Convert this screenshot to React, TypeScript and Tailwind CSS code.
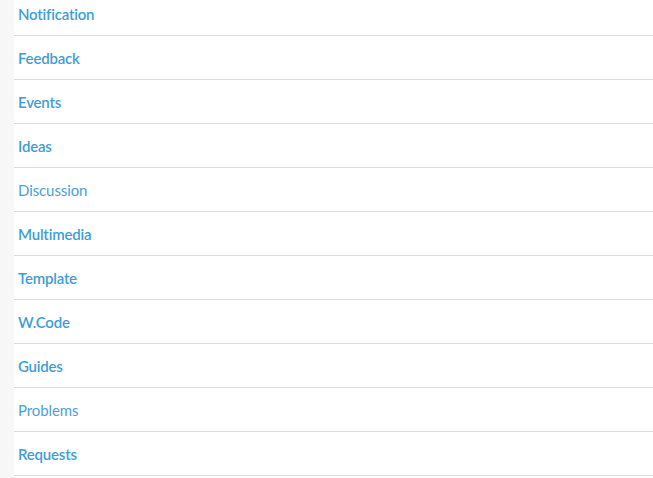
import React from "react";

const items: { label: string; bold: boolean }[] = [
  { label: "Notification", bold: true },
  { label: "Feedback", bold: true },
  { label: "Events", bold: true },
  { label: "Ideas", bold: true },
  { label: "Discussion", bold: false },
  { label: "Multimedia", bold: true },
  { label: "Template", bold: true },
  { label: "W.Code", bold: true },
  { label: "Guides", bold: true },
  { label: "Problems", bold: false },
  { label: "Requests", bold: true },
];

export default function App() {
  return (
    <div className="w-[653px] h-[478px] overflow-hidden bg-[#f7f7f7] flex">
      <div className="w-[14px] shrink-0" />
      <ul className="flex-1 bg-white mt-[-8px] font-['Lato',sans-serif]">
        {items.map((it) => (
          <li
            key={it.label}
            className="h-[44px] border-b border-[#dddddd] flex items-center pl-[4px] pt-[2px]"
          >
            <span
              className={
                it.bold
                  ? "text-[15px] font-semibold text-[#3f9dd4] tracking-[-0.2px]"
                  : "text-[15px] font-normal text-[#4d9fd6] tracking-[-0.1px]"
              }
            >
              {it.label}
            </span>
          </li>
        ))}
      </ul>
    </div>
  );
}
